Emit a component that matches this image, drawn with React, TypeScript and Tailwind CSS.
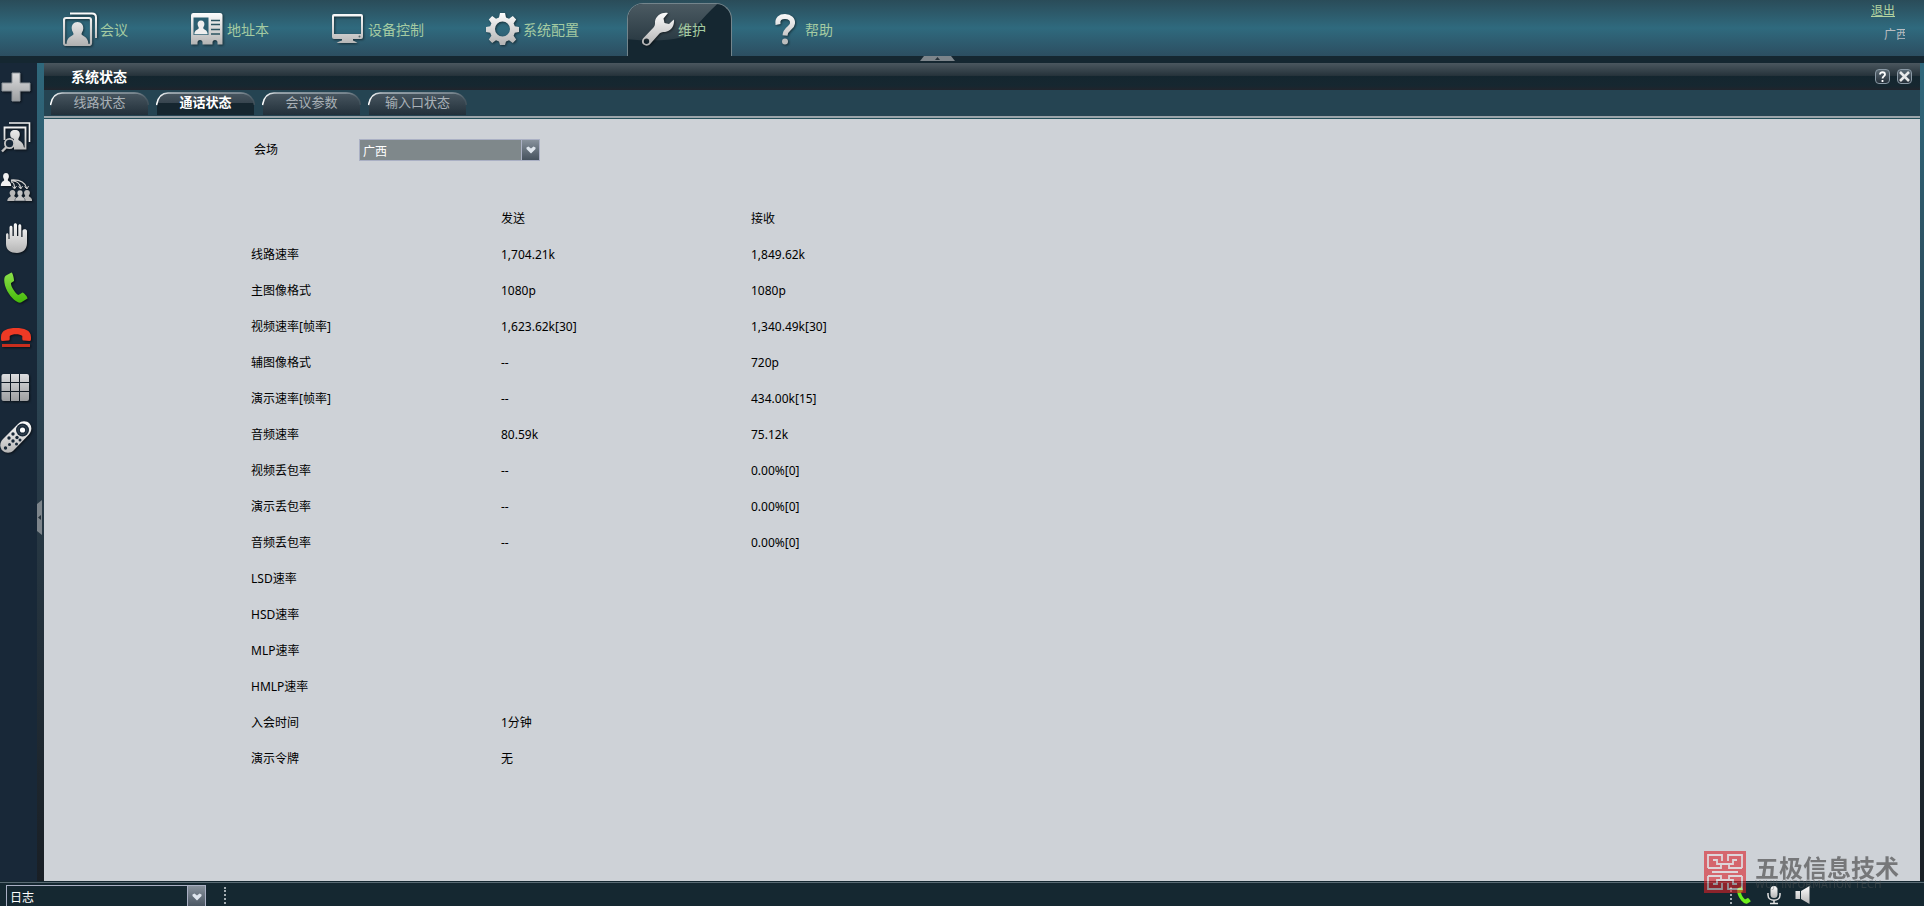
import clsx from "clsx";
import type { ReactNode } from "react";
import { useState } from "react";

const navItems = [
  { key: "conference", label: "会议", icon: <ConferenceIcon /> },
  { key: "address", label: "地址本", icon: <AddressBookIcon /> },
  { key: "device", label: "设备控制", icon: <MonitorIcon /> },
  { key: "config", label: "系统配置", icon: <GearIcon /> },
  { key: "maintain", label: "维护", icon: <WrenchIcon /> },
  { key: "help", label: "帮助", icon: <HelpIcon /> },
];

const tabs = ["线路状态", "通话状态", "会议参数", "输入口状态"];

const rows: [string, string, string][] = [
  ["线路速率", "1,704.21k", "1,849.62k"],
  ["主图像格式", "1080p", "1080p"],
  ["视频速率[帧率]", "1,623.62k[30]", "1,340.49k[30]"],
  ["辅图像格式", "--", "720p"],
  ["演示速率[帧率]", "--", "434.00k[15]"],
  ["音频速率", "80.59k", "75.12k"],
  ["视频丢包率", "--", "0.00%[0]"],
  ["演示丢包率", "--", "0.00%[0]"],
  ["音频丢包率", "--", "0.00%[0]"],
  ["LSD速率", "", ""],
  ["HSD速率", "", ""],
  ["MLP速率", "", ""],
  ["HMLP速率", "", ""],
  ["入会时间", "1分钟", ""],
  ["演示令牌", "无", ""],
];

const sideTools = [
  { label: "添加会场", icon: <PlusIcon /> },
  { label: "观看会场", icon: <WatchIcon /> },
  { label: "广播会场", icon: <BroadcastIcon /> },
  { label: "申请发言", icon: <HandIcon /> },
  { label: "呼叫", icon: <CallIcon /> },
  { label: "挂断", icon: <HangUpIcon /> },
  { label: "多画面", icon: <GridIcon /> },
  { label: "遥控器", icon: <RemoteIcon /> },
];

function Defs() {
  return (
    <svg className="absolute size-0" aria-hidden="true">
      <defs>
        <linearGradient id="silver" x1="0" y1="0" x2="0" y2="1">
          <stop offset="0" stopColor="#ffffff" />
          <stop offset="1" stopColor="#b4b4b4" />
        </linearGradient>
        <linearGradient id="steel" x1="0" y1="0" x2="0" y2="1">
          <stop offset="0" stopColor="#dcdddf" />
          <stop offset="1" stopColor="#9c9ea0" />
        </linearGradient>
        <linearGradient id="metal" x1="0" y1="0" x2="0" y2="34" gradientUnits="userSpaceOnUse">
          <stop offset="0" stopColor="#ffffff" />
          <stop offset="1" stopColor="#b0b0b0" />
        </linearGradient>
        <linearGradient id="lime" x1="0" y1="0" x2="0" y2="1">
          <stop offset="0" stopColor="#8be04a" />
          <stop offset="1" stopColor="#45b90a" />
        </linearGradient>
      </defs>
    </svg>
  );
}

function NavSvg({ children }: { children: ReactNode }) {
  return (
    <svg viewBox="0 0 34 34" className="size-[34px] shrink-0 drop-shadow-[1px_1px_1px_rgba(0,0,0,0.5)]" aria-hidden="true">
      {children}
    </svg>
  );
}

function SideSvg({ children }: { children: ReactNode }) {
  return (
    <svg viewBox="0 0 32 32" className="block size-8 drop-shadow-[1px_1px_1px_rgba(0,0,0,0.6)]" aria-hidden="true">
      {children}
    </svg>
  );
}

function ConferenceIcon() {
  return (
    <NavSvg>
      <path d="M7 1.5H29Q33 1.5 33 5.5V26" fill="none" stroke="url(#metal)" strokeWidth="2" />
      <path d="M3 6H26Q28 6 28 8V31Q28 33 26 33H3Q1 33 1 31V8Q1 6 3 6Z" fill="none" stroke="url(#metal)" strokeWidth="2.2" />
      <path d="M14.5 10C18.5 10 20.5 13 20.3 16.5C20.1 19.5 18.5 20.5 18.5 22C18.5 24 25 24 25.5 32H3.5C4 24 10.5 24 10.5 22C10.5 20.5 8.9 19.5 8.7 16.5C8.5 13 10.5 10 14.5 10Z" fill="url(#metal)" />
    </NavSvg>
  );
}

function AddressBookIcon() {
  return (
    <NavSvg>
      <path
        d="M3 1H30Q32.5 1 32.5 3.5V32.5H27.5V30.5A2.5 2.5 0 0 0 22.5 30.5V32.5H12.5V30.5A2.5 2.5 0 0 0 7.5 30.5V32.5H1V3.5Q1 1 3 1Z"
        fill="url(#metal)"
      />
      <path d="M3.5 5.5H18.5V23H3.5Z" fill="#2b5e70" />
      <path d="M11 8.5C13.5 8.5 14.5 10.3 14.4 12.3C14.3 14.2 13.2 15 13.2 16C13.2 17.5 17.5 17.5 17.7 22.2H4.3C4.5 17.5 8.8 17.5 8.8 16C8.8 15 7.7 14.2 7.6 12.3C7.5 10.3 8.5 8.5 11 8.5Z" fill="#eeeeee" />
      <path d="M21 8.5H30M21 12.5H30M21 17.5H30M21 22H30" stroke="#2b5360" strokeWidth="1.6" />
    </NavSvg>
  );
}

function MonitorIcon() {
  return (
    <NavSvg>
      <path
        fillRule="evenodd"
        d="M3 2H30Q32 2 32 4V25Q32 27 30 27H22V28.5Q25 29.5 26.5 31H5.5Q7 29.5 11 28.5V27H3Q1 27 1 25V4Q1 2 3 2ZM3 4.5V22H30V4.5Z"
        fill="url(#metal)"
      />
      <circle cx="28.5" cy="24.5" r="1" fill="#56656b" />
    </NavSvg>
  );
}

function GearIcon() {
  return (
    <NavSvg>
      <path
        fillRule="evenodd"
        d="M14 1H19L20 5.5L23 6.7L26.8 4L30.2 7.4L27.6 11.2L28.8 14.2L33 15V20L28.8 20.8L27.6 23.8L30.2 27.6L26.8 31L23 28.3L20 29.5L19 33H14L13 29.5L10 28.3L6.2 31L2.8 27.6L5.4 23.8L4.2 20.8L0 20V15L4.2 14.2L5.4 11.2L2.8 7.4L6.2 4L10 6.7L13 5.5ZM16.5 9.500A7.5 7.5 0 1 0 16.5 24.500A7.5 7.5 0 1 0 16.5 9.500Z"
        fill="url(#metal)"
      />
    </NavSvg>
  );
}

function WrenchIcon() {
  return (
    <NavSvg>
      <path
        fillRule="evenodd"
        d="M27 1C22.5 -0.5 14.5 3 14 9.5C14 12 14.2 13.5 12.5 15.5L2 26.5C0.5 28.5 0.5 31 2.5 32.5C4.5 34.2 7.5 34 9.2 32L18.5 21.5C20 20 22 20 24 20C30 19.5 34 13 32.8 7.5L28 12L23.5 11L22.5 6.5ZM5.5 26.6A2.7 2.7 0 1 1 5.5 32A2.7 2.7 0 1 1 5.5 26.6Z"
        fill="url(#metal)"
      />
    </NavSvg>
  );
}

function HelpIcon() {
  return (
    <NavSvg>
      <path d="M10 12.5C9 6.5 12.5 4.5 17 4.5C22 4.5 25 7.5 24.5 11.5C24 16.5 17.5 16 17 23.5" fill="none" stroke="url(#metal)" strokeWidth="5" />
      <circle cx="17" cy="29.5" r="3" fill="#bdbdbd" />
    </NavSvg>
  );
}

function PlusIcon() {
  return (
    <SideSvg>
      <path d="M12 2H20V12H30V20H20V30H12V20H2V12H12Z" fill="url(#steel)" stroke="#8f969c" strokeWidth="1" />
    </SideSvg>
  );
}

function WatchIcon() {
  return (
    <SideSvg>
      <path d="M9 2H29.5V21" fill="none" stroke="#f2f2f2" strokeWidth="1.6" />
      <path d="M4.5 19V6.5H25.5V27.5H14" fill="none" stroke="url(#metal)" strokeWidth="1.8" />
      <path d="M15 9C18.5 9 20 11 19.8 13.8C19.7 16 18.3 17 18.3 18.5C18.3 20 23.5 20 24 27H14V18C11 17 10.3 16 10.2 13.8C10 11 11.5 9 15 9Z" fill="url(#metal)" />
      <circle cx="9.5" cy="22.5" r="4.6" fill="#182838" stroke="#c4c4c4" strokeWidth="1.8" />
      <path d="M6.5 26L2 30.5" stroke="#c4c4c4" strokeWidth="2.4" />
    </SideSvg>
  );
}

function BroadcastIcon() {
  const person = "M0 0C2 0 3 1.5 2.9 3C2.8 4.5 1.8 5 1.8 6C1.8 7 5 7 5.2 11H-5.2C-5 7 -1.8 7 -1.8 6C-1.8 5 -2.8 4.5 -2.9 3C-3 1.5 -2 0 0 0Z";
  return (
    <SideSvg>
      <path d={person} transform="translate(6 2) scale(1 1.18)" fill="#f0f0f0" />
      <path d="M11 9C19 8.5 25 11 26.5 17M11 10C16 9.5 20 12 20.5 17M11 11C13 11 14.5 13 14.5 17" fill="none" stroke="#d0d0d0" strokeWidth="1.2" />
      <path d="M24.5 15.5L27 18L28.5 15M18.5 15.5L20.8 18L22.5 15M12.5 15.5L14.5 18L16.5 15" fill="none" stroke="#d0d0d0" strokeWidth="1" />
      <path d={person} transform="translate(12.5 19)" fill="#b8b8b8" />
      <path d={person} transform="translate(27 19)" fill="#b8b8b8" />
      <path d={person} transform="translate(20 19)" fill="#c6c6c6" stroke="#182838" strokeWidth="0.5" />
    </SideSvg>
  );
}

function HandIcon() {
  return (
    <SideSvg>
      <path
        d="M6 14C6 11.5 8.5 11.5 8.5 14V18H9.5V6.5C9.5 4 12.5 4 12.5 6.5V15H13.8V4C13.8 1.5 17 1.5 17 4V15H18.3V5C18.3 2.5 21.3 2.5 21.3 5V16H22.5V10C22.5 7.5 27 7.5 27 10V22C27 28.5 22.5 32 17 32C10.5 32 6 29 6 23Z"
        fill="url(#metal)"
      />
    </SideSvg>
  );
}

const handset =
  "M11.5 1.5L6 4.5C3 6.5 4 14 7.5 20.5C11.5 27.5 17.5 32.5 21 31.5L27.5 27.5C28 26.5 24 21.5 22.5 21.5L18.5 24C16 23.5 10.5 15 11 12L14 10C14.3 8 12.7 2 11.5 1.5Z";

function CallIcon() {
  return (
    <SideSvg>
      <path d={handset} fill="url(#lime)" />
    </SideSvg>
  );
}

function HangUpIcon() {
  return (
    <SideSvg>
      <path d="M1 16C1 9 8 7 16 7C24 7 31 9 31 16V18.5Q31 20 29.5 20L23.5 19.5Q22.3 19.5 22.3 18V15C20 12.5 12 12.5 9.7 15V18Q9.7 19.5 8.5 19.5L2.5 20Q1 20 1 18.5Z" fill="#ee3a25" />
      <path d="M2 24.5H30" stroke="#c92e1e" strokeWidth="3" />
    </SideSvg>
  );
}

function GridIcon() {
  return (
    <SideSvg>
      <path
        d="M3.5 3H10V11H1.5V5Q1.5 3 3.5 3ZM11 3H19V11H11ZM20 3H27Q29 3 29 5V11H20ZM1.5 12H10V20H1.5ZM11 12H19V20H11ZM20 12H29V20H20ZM1.5 21H10V30H3.5Q1.5 30 1.5 28ZM11 21H19V30H11ZM20 21H29V28Q29 30 27 30H20Z"
        fill="url(#steel)"
      />
    </SideSvg>
  );
}

function RemoteIcon() {
  return (
    <SideSvg>
      <path d="M18 3C22 -1 27 0 29.5 2.5C32 5.5 32 10 29 13.5L13.5 29.5C10.5 32.5 5.5 32.5 2.5 29.5C-0.5 26.5 -0.5 21.5 3 18Z" fill="url(#metal)" />
      <circle cx="22.5" cy="9" r="6.5" fill="#182838" />
      <circle cx="22.5" cy="9" r="4.5" fill="none" stroke="#3c4a56" strokeWidth="1" />
      <circle cx="22.5" cy="9" r="2.6" fill="#ffffff" />
      <g fill="#182838">
        <circle cx="13" cy="13" r="1.7" />
        <circle cx="17" cy="16.5" r="1.7" />
        <circle cx="20" cy="19" r="1.5" />
        <circle cx="9" cy="17" r="1.7" />
        <circle cx="13" cy="20" r="1.7" />
        <circle cx="16.5" cy="23" r="1.5" />
        <circle cx="9.5" cy="23.5" r="1.5" />
        <circle cx="5.5" cy="27" r="1.7" />
      </g>
    </SideSvg>
  );
}

function SelectArrow() {
  return (
    <span className="pointer-events-none flex w-[17px] shrink-0 items-center justify-center bg-gradient-to-b from-[#87919c] to-[#46525e]">
      <svg viewBox="0 0 10 8" className="h-2 w-[10px]" aria-hidden="true">
        <path d="M0.5 1.5L2.5 0.5L5 2.5L7.5 0.5L9.5 1.5V3L5 7.5L0.5 3Z" fill="#dfe6ee" />
      </svg>
    </span>
  );
}

const TopBar = ({ active, onSelect }: { active: string; onSelect: (key: string) => void }) => (
  <header className="relative flex h-14 shrink-0 justify-between bg-gradient-to-b from-[#2a4c59] via-[#2f6a7e] to-[#2c4e61]">
    <nav className="flex gap-[22px] pl-[49px] pt-[3px]">
      {navItems.map((item) => (
        <button
          key={item.key}
          type="button"
          onClick={() => onSelect(item.key)}
          className={clsx(
            "relative flex items-start gap-[3px] overflow-hidden rounded-t-2xl border border-b-0 pl-[13px] pr-[25px] pt-2 text-sm text-[#a5cba2]",
            active === item.key ? "border-[#74858c] bg-[#152731]" : "border-transparent",
          )}
        >
          {active === item.key && (
            <svg viewBox="0 0 105 53" preserveAspectRatio="none" className="absolute inset-0 size-full" aria-hidden="true">
              <linearGradient id="gloss" x1="0" y1="0" x2="0" y2="1">
                <stop offset="0" stopColor="#4b5a62" />
                <stop offset="1" stopColor="#2b3b44" />
              </linearGradient>
              <path d="M0 0H91C75 14 68 28 55 34C40 38 20 38 0 36Z" fill="url(#gloss)" />
            </svg>
          )}
          <span className="relative">{item.icon}</span>
          <span className="relative pt-2">{item.label}</span>
        </button>
      ))}
    </nav>
    <div className="flex flex-col items-end gap-2 pr-[19px] pt-[3px] text-xs leading-4">
      <a href="#logout" className="mr-[10px] text-[#b4d3a0] underline">
        退出
      </a>
      <span className="w-[21px] overflow-hidden whitespace-nowrap text-[#b9bcc0]">广西</span>
    </div>
    <button type="button" aria-label="收起" className="absolute left-[920px] top-14 z-10">
      <svg viewBox="0 0 35 5" className="block h-[5px] w-[35px]" aria-hidden="true">
        <path d="M4 0H31L35 5H0Z" fill="#7d858b" />
        <path d="M17.5 1L20 4H15Z" fill="#27333b" />
      </svg>
    </button>
  </header>
);

const SideBar = () => (
  <aside className="flex w-11 shrink-0 bg-[#182838]">
    <div className="flex w-[37px] flex-col gap-[18px] pt-2">
      {sideTools.map((tool) => (
        <button key={tool.label} type="button" aria-label={tool.label}>
          {tool.icon}
        </button>
      ))}
    </div>
    <div className="flex w-[7px] flex-col bg-gradient-to-b from-[#2f687c] via-[#293c49] to-[#191f25] pt-[437px]">
      <button type="button" aria-label="收起侧栏">
        <svg viewBox="0 0 5 35" className="block h-[35px] w-[5px]" aria-hidden="true">
          <path d="M5 0V35L0 31V4Z" fill="#7d858b" />
          <path d="M1 17.5L4 15V20Z" fill="#27333b" />
        </svg>
      </button>
    </div>
  </aside>
);

const TitleBar = () => (
  <div className="flex h-[27px] items-center justify-between bg-[linear-gradient(to_bottom,#4b575f_0%,#25323a_48%,#14262f_48%,#162730_85%,#20242c_100%)] pl-[27px] pr-2">
    <h1 className="text-sm font-bold text-white">系统状态</h1>
    <div className="flex gap-[7px]">
      <button type="button" aria-label="帮助" className="size-[15px] rounded-sm border border-[#8a99a5] bg-gradient-to-b from-[#5c6a74] to-[#25303a]">
        <svg viewBox="0 0 13 13" className="block size-[13px]" aria-hidden="true">
          <path d="M4 4.5C4 1.5 9 1.5 9 4.5C9 6 6.5 6.5 6.5 8.5M6.5 10V12" fill="none" stroke="#ffffff" strokeWidth="1.8" />
        </svg>
      </button>
      <button type="button" aria-label="关闭" className="size-[15px] rounded-sm border border-[#8a99a5] bg-gradient-to-b from-[#5c6a74] to-[#25303a]">
        <svg viewBox="0 0 13 13" className="block size-[13px]" aria-hidden="true">
          <path d="M2 2L11 11M11 2L2 11" stroke="#e8e8e8" strokeWidth="2.6" />
        </svg>
      </button>
    </div>
  </div>
);

const TabBar = ({ active, onSelect }: { active: string; onSelect: (tab: string) => void }) => (
  <div role="tablist" className="flex h-[29px] items-start gap-[7px] border-b border-[#24505b] bg-[#254452] pl-[6px] pt-[2px] shadow-[inset_0_-2px_0_#9ba5aa]">
    {tabs.map((tab) => (
      <button
        key={tab}
        type="button"
        role="tab"
        aria-selected={active === tab}
        onClick={() => onSelect(tab)}
        className={clsx(
          "relative h-[23px] w-[99px] pb-[3px] text-[13px] leading-5",
          active === tab ? "font-bold text-white" : "text-[#a9b1b7]",
        )}
      >
        <svg viewBox="0 0 99 23" className="absolute inset-0 size-full" aria-hidden="true">
          <linearGradient id="tab" x1="0" y1="0" x2="0" y2="1">
            <stop offset="0" stopColor="#485660" />
            <stop offset="1" stopColor="#22303a" />
          </linearGradient>
          <linearGradient id="tab-edge" x1="0" y1="0" x2="1" y2="0">
            <stop offset="0" stopColor="#ffffff" />
            <stop offset="0.15" stopColor="#b4bcc2" />
            <stop offset="0.85" stopColor="#8b969e" />
            <stop offset="1" stopColor="#3f4f59" />
          </linearGradient>
          <path d="M1 23V13C2 5 6 1 12 1H85C93 1 98 8 98 14V23Z" fill="url(#tab)" />
          {active === tab && <path d="M1 23V11H98V23Z" fill="#15262f" />}
          <path d="M0.5 13C2 5 6 1 12 1H85C93 1 98 7 98.5 13" fill="none" stroke="url(#tab-edge)" strokeWidth="1.5" />
        </svg>
        <span className="relative">{tab}</span>
      </button>
    ))}
  </div>
);

const CallStatus = () => (
  <section className="px-[207px] pt-5 text-xs text-black">
    <div className="flex items-center pl-[3px]">
      <label htmlFor="site" className="w-[105px]">
        会场
      </label>
      <div className="flex h-[22px] w-[181px] border border-[#aab0c4]">
        <select id="site" className="min-w-0 flex-1 appearance-none border-r border-[#aab0c4] bg-[#7f888b] pl-[3px] pt-1 text-white">
          <option>广西</option>
        </select>
        <SelectArrow />
      </div>
    </div>
    <table className="mt-10 w-[750px] table-fixed text-left">
      <thead>
        <tr className="h-9">
          <th aria-label="项目" />
          <th className="font-normal">发送</th>
          <th className="font-normal">接收</th>
        </tr>
      </thead>
      <tbody>
        {rows.map(([name, sent, received]) => (
          <tr key={name} className="h-9">
            <th scope="row" className="font-normal">
              {name}
            </th>
            <td>{sent}</td>
            <td>{received}</td>
          </tr>
        ))}
      </tbody>
    </table>
  </section>
);

const StatusBar = () => (
  <footer className="flex h-[25px] shrink-0 items-start justify-between overflow-hidden border-t border-[#152831] bg-[#152831] pl-[6px] pt-[3px] shadow-[inset_0_1px_0_#5a6b74]">
    <div className="flex">
      <div className="flex h-6 w-[200px] border border-[#aab0c4]">
        <select aria-label="日志" className="min-w-0 flex-1 appearance-none border-r border-[#aab0c4] bg-[#152831] pl-[3px] pt-[2px] text-xs text-white">
          <option>日志</option>
        </select>
        <SelectArrow />
      </div>
      <span className="ml-[18px] mt-[2px] h-6 border-l-2 border-dotted border-[#a4adb2]" />
    </div>
    <div className="flex pr-[114px]">
      <span className="mt-[2px] h-6 border-l-2 border-dotted border-[#a4adb2]" />
      <svg viewBox="3 1 26 31" className="ml-1 mt-px h-[18px] w-4" aria-label="通话">
        <path d={handset} fill="#6cf01c" />
      </svg>
      <svg viewBox="0 0 14 20" className="ml-[15px] h-5 w-[14px]" aria-label="麦克风">
        <rect x="3.5" y="1" width="7" height="12" rx="3.5" fill="url(#silver)" />
        <path d="M1 8V10C1 17 13 17 13 10V8M7 15V18M3 18.5H11" fill="none" stroke="#e2e2e2" strokeWidth="1.5" />
      </svg>
      <svg viewBox="0 0 15 20" className="ml-[14px] h-5 w-[15px]" aria-label="扬声器">
        <path d="M0.5 6H5V14H0.5ZM6 6L14.5 1V19L6 14Z" fill="url(#silver)" />
      </svg>
    </div>
  </footer>
);

const Watermark = () => (
  <div className="pointer-events-none absolute bottom-[13px] right-6 flex gap-[9px]">
    <svg viewBox="0 0 42 42" className="size-[42px] opacity-60" aria-hidden="true">
      <path d="M0 0H42V42H0Z" fill="#db2028" />
      <path
        d="M4 17V4H18V10M24 10V4H38V17M4 25V38H18V32M24 32V38H38V25M9 9H13V13H29V9H33M9 33H13V29H29V33H33M4 17H17V13M38 17H25V13M4 25H17V29M38 25H25V29M8 21H34"
        fill="none"
        stroke="#e9dadd"
        strokeWidth="1.8"
      />
    </svg>
    <div className="flex w-[145px] flex-col whitespace-nowrap pt-[5px]">
      <span className="text-2xl leading-6 font-bold text-[#3c3c3c] opacity-60">五极信息技术</span>
      <span className="font-['DejaVu_Sans',sans-serif] text-[10px] leading-[10px] text-[#5a5a5a] opacity-40">WUJI INFORMATION TECH</span>
    </div>
  </div>
);

const App = () => {
  const [activeNav, setActiveNav] = useState("maintain");
  const [activeTab, setActiveTab] = useState("通话状态");

  return (
    <div className="relative flex h-screen flex-col overflow-hidden bg-[#152731] font-['Noto_Sans','Noto_Sans_CJK_SC',sans-serif]">
      <Defs />
      <TopBar active={activeNav} onSelect={setActiveNav} />
      <div className="mt-[7px] flex min-h-0 flex-1">
        <SideBar />
        <main className="flex min-w-0 flex-1 flex-col bg-[#ced2d7]">
          <TitleBar />
          <TabBar active={activeTab} onSelect={setActiveTab} />
          <CallStatus />
        </main>
        <div className="w-1 shrink-0 bg-gradient-to-b from-[#2f687c] via-[#293c49] to-[#191f25]" />
      </div>
      <StatusBar />
      <Watermark />
    </div>
  );
};

export default App;
